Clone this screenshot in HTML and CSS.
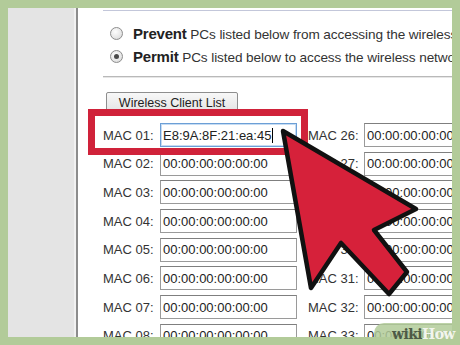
FILE: index.html
```html
<!DOCTYPE html>
<html>
<head>
<meta charset="utf-8">
<link rel="stylesheet" href="styles.css">
</head>
<body>
<div class="frame">
  <div class="sidebar"></div>
  <div class="divider"></div>
  <div class="content">
    <div class="rule-top"></div>
    <div class="options">
      <div class="opt"><span class="radio"></span><span class="opt-text"><b>Prevent</b> PCs listed below from accessing the wireless network</span></div>
      <div class="opt"><span class="radio checked"></span><span class="opt-text"><b>Permit</b> PCs listed below to access the wireless network</span></div>
    </div>
    <div class="rule-sep"></div>
    <div class="btn-row"><button class="btn">Wireless Client List</button></div>
    <div class="grid">
      <div class="lbl">MAC 01:</div><div class="cell"><div class="field focus">E8:9A:8F:21:ea:45<span class="caret"></span></div></div>
      <div class="lbl">MAC 26:</div><div class="cell"><div class="field">00:00:00:00:00:00</div></div>
      <div class="lbl">MAC 02:</div><div class="cell"><div class="field">00:00:00:00:00:00</div></div>
      <div class="lbl">MAC 27:</div><div class="cell"><div class="field">00:00:00:00:00:00</div></div>
      <div class="lbl">MAC 03:</div><div class="cell"><div class="field">00:00:00:00:00:00</div></div>
      <div class="lbl">MAC 28:</div><div class="cell"><div class="field">00:00:00:00:00:00</div></div>
      <div class="lbl">MAC 04:</div><div class="cell"><div class="field">00:00:00:00:00:00</div></div>
      <div class="lbl">MAC 29:</div><div class="cell"><div class="field">00:00:00:00:00:00</div></div>
      <div class="lbl">MAC 05:</div><div class="cell"><div class="field">00:00:00:00:00:00</div></div>
      <div class="lbl">MAC 30:</div><div class="cell"><div class="field">00:00:00:00:00:00</div></div>
      <div class="lbl">MAC 06:</div><div class="cell"><div class="field">00:00:00:00:00:00</div></div>
      <div class="lbl">MAC 31:</div><div class="cell"><div class="field">00:00:00:00:00:00</div></div>
      <div class="lbl">MAC 07:</div><div class="cell"><div class="field">00:00:00:00:00:00</div></div>
      <div class="lbl">MAC 32:</div><div class="cell"><div class="field">00:00:00:00:00:00</div></div>
      <div class="lbl">MAC 08:</div><div class="cell"><div class="field">00:00:00:00:00:00</div></div>
      <div class="lbl">MAC 33:</div><div class="cell"><div class="field">00:00:00:00:00:00</div></div>
    </div>
    <div class="highlight"></div>
  </div>
</div>
<svg class="arrow" width="460" height="345" viewBox="0 0 460 345">
  <polygon points="283,131 416,209 374,230 407,272 389,294 341,243 311,288" fill="#d6213a" stroke="#111" stroke-width="4.5" stroke-linejoin="round"/>
</svg>
<div class="watermark"><span class="wm-wiki">wiki</span><span class="wm-how">How</span></div>
</body>
</html>
```

FILE: styles.css
```css
* { box-sizing: border-box; }
html, body { margin: 0; padding: 0; }
body {
  width: 460px;
  height: 345px;
  overflow: hidden;
  background: #b2cb99;
  position: relative;
  font-family: "Liberation Sans", Arial, sans-serif;
}
.frame {
  display: flex;
  margin: 8px 8px 0 8px;
  height: 329px;
}
.sidebar {
  width: 66px;
  background: #e4e4e4;
}
.divider {
  width: 4px;
  background: #f1f1f1;
  border-right: 2px solid #8c8c8c;
}
.content {
  flex: 1;
  background: #fff;
  overflow: hidden;
  position: relative;
  display: flex;
  flex-direction: column;
}
.rule-top {
  margin: 2px 0 0 25px;
  height: 1px;
  background: #c3c7da;
  flex: none;
}
.options {
  margin-top: 11px;
  padding-left: 32px;
  flex: none;
}
.opt {
  height: 23px;
  display: flex;
  align-items: center;
  white-space: nowrap;
  font-size: 13.6px;
  letter-spacing: -0.1px;
  color: #333;
}
.opt b { color: #222; font-size: 15px; letter-spacing: -0.2px; }
.radio {
  width: 13px;
  height: 13px;
  border-radius: 50%;
  border: 1px solid #8d8d8d;
  background: radial-gradient(circle at 40% 35%, #fdfdfd 0%, #e6e6e6 60%, #cfcfcf 100%);
  margin-right: 10px;
  flex: none;
  position: relative;
}
.radio.checked::after {
  content: "";
  position: absolute;
  left: 3px;
  top: 3px;
  width: 5px;
  height: 5px;
  border-radius: 50%;
  background: #4a4a4a;
}
.rule-sep {
  margin: 8px 0 0 25px;
  height: 2px;
  border-top: 1px solid #b9b9b9;
  border-bottom: 1px solid #e6e6e6;
  flex: none;
}
.btn-row {
  margin-top: 14px;
  padding-left: 28px;
  flex: none;
}
.btn {
  width: 132px;
  height: 22px;
  font-family: "Liberation Sans", Arial, sans-serif;
  font-size: 12.5px;
  color: #222;
  background: linear-gradient(#f8f8f8, #e2e2e2);
  border: 1px solid #8e8e8e;
  border-radius: 2px;
  padding: 0;
}
.grid {
  margin-top: 9px;
  padding-left: 25px;
  display: grid;
  grid-template-columns: 57px 148px 56px 130px;
  grid-auto-rows: 24px;
  row-gap: 4.7px;
  flex: none;
}
.lbl {
  font-size: 13px;
  color: #333;
  display: flex;
  align-items: center;
  white-space: nowrap;
}
.cell { display: flex; }
.field {
  width: 137px;
  height: 24px;
  border: 1px solid #9a9a9a;
  border-top-color: #7f7f7f;
  padding-left: 2px;
  font-size: 13px;
  color: #222;
  display: flex;
  align-items: center;
  white-space: nowrap;
  overflow: hidden;
  background: #fff;
}
.grid .cell:nth-child(4n) .field { width: 130px; }
.field.focus {
  border: 1px solid #6c9fd6;
  box-shadow: inset 0 0 0 1px #c6dcf3;
}
.caret {
  display: inline-block;
  width: 1px;
  height: 15px;
  background: #000;
  margin-left: 1px;
}
.highlight {
  position: absolute;
  left: 10px;
  top: 101px;
  width: 220px;
  height: 46px;
  border: 7px solid #d0223a;
}
.arrow {
  position: absolute;
  left: 0;
  top: 0;
  pointer-events: none;
}
.watermark {
  position: absolute;
  left: 374px;
  top: 323px;
  width: 86px;
  height: 22px;
  background: rgba(178, 203, 153, 0.85);
  border-top-left-radius: 10px;
  padding-left: 18px;
  font-family: "DejaVu Serif", serif;
  font-weight: bold;
  font-size: 14px;
  line-height: 22px;
  letter-spacing: -0.6px;
  white-space: nowrap;
}
.wm-wiki { color: #4d5a46; }
.wm-how { color: #f2f5ee; }
```
